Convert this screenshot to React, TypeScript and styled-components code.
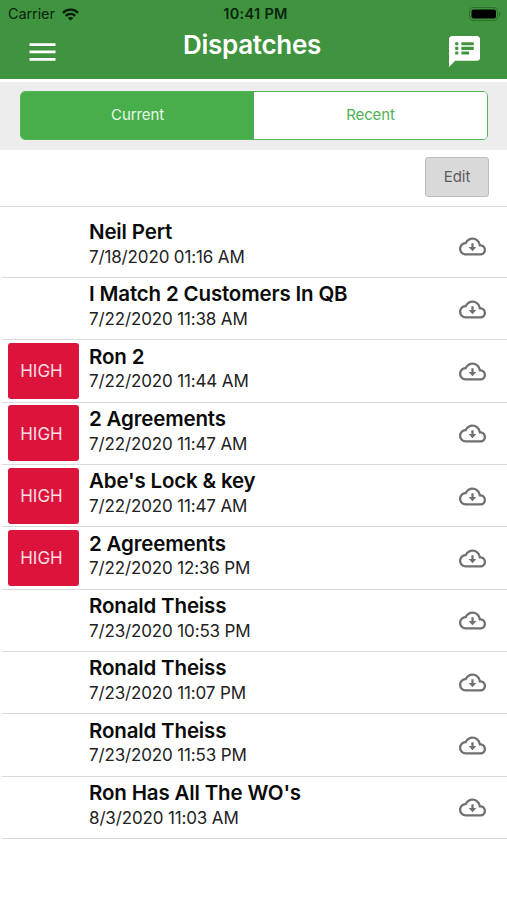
import React from "react";
import styled, { createGlobalStyle } from "styled-components";

const GlobalStyle = createGlobalStyle`
  *, *::before, *::after { box-sizing: border-box; }
  html, body { margin: 0; padding: 0; background: #fff; }
  body { font-family: Inter, "Liberation Sans", sans-serif; color: #0b0b0b; }
  button { font-family: inherit; margin: 0; padding: 0; cursor: pointer; }
`;

const Screen = styled.div`
  display: flex;
  flex-direction: column;
  width: 100%;
  height: 900px;
  overflow: hidden;
  background: #fff;
`;

const Header = styled.header`
  height: 79px;
  background: #409440;
`;

const StatusBar = styled.div`
  display: grid;
  grid-template-columns: 1fr auto 1fr;
  align-items: center;
  height: 28px;
  padding: 0 6px 0 8px;
  color: #0a250c;
`;

const Carrier = styled.div`
  display: flex;
  align-items: center;
  gap: 7px;
  font-size: 14.5px;
  line-height: 28px;
  letter-spacing: -0.1px;
`;

const Clock = styled.div`
  font-size: 14.5px;
  font-weight: 600;
  line-height: 28px;
  letter-spacing: 0.3px;
  padding-left: 2px;
`;

const BatterySlot = styled.div`
  display: flex;
  justify-content: flex-end;
  padding-bottom: 1px;
`;

const NavBar = styled.div`
  display: grid;
  grid-template-columns: 80px 1fr 80px;
  height: 51px;
  color: #fff;
`;

const IconButton = styled.button<{ $align: "start" | "end" }>`
  display: flex;
  align-items: flex-start;
  justify-content: flex-${(p) => p.$align};
  border: 0;
  background: none;
  color: #fff;
  padding: ${(p) => (p.$align === "start" ? "15px 0 0 29px" : "8px 27px 0 0")};
`;

const Title = styled.h1`
  margin: 0;
  padding: 1px 3px 0 0;
  text-align: center;
  font-size: 26px;
  font-weight: 600;
  line-height: 32px;
  letter-spacing: -0.3px;
`;

const SegmentBar = styled.div`
  height: 68px;
  margin-top: 3px;
  padding: 9px 19px 0 20px;
  background: #ededed;
`;

const Segments = styled.div`
  display: grid;
  grid-template-columns: 1fr 1fr;
  height: 49px;
  border: 1px solid #54b557;
  border-radius: 5px;
  overflow: hidden;
  background: #fff;
`;

const Segment = styled.button<{ $active?: boolean }>`
  border: 0;
  padding-bottom: 2px;
  background: ${(p) => (p.$active ? "#48ae4c" : "#fff")};
  color: ${(p) => (p.$active ? "#e6f8e6" : "#4db251")};
  font-size: 15px;
  letter-spacing: -0.1px;
`;

const Toolbar = styled.div`
  display: flex;
  justify-content: flex-end;
  height: 57px;
  padding: 7px 18px 0 0;
  border-bottom: 1px solid #dcdcdc;
`;

const EditButton = styled.button`
  width: 64px;
  height: 40px;
  padding-bottom: 2px;
  border: 1px solid #bdbdbd;
  border-radius: 3px;
  background: #d9d9d9;
  color: #5c5c5c;
  font-size: 15px;
`;

const List = styled.ul`
  margin: 0;
  padding: 8.6px 0 0 2px;
  list-style: none;
`;

const Row = styled.li`
  display: grid;
  grid-template-columns: 87px 1fr 48px;
  height: 62.33px;
  border-bottom: 1px solid #d9d9d9;
`;

const Badge = styled.div`
  display: flex;
  align-items: center;
  justify-content: center;
  width: 71px;
  height: 56px;
  margin: 2.6px 0 0 6px;
  padding: 1px 4px 0 0;
  border-radius: 3px;
  background: #dc143c;
  color: #fbdde3;
  font-size: 17px;
`;

const Details = styled.div`
  grid-column: 2;
  padding-top: 3.4px;
  white-space: nowrap;
`;

const Name = styled.div`
  font-size: 20.5px;
  font-weight: 600;
  line-height: 25px;
  letter-spacing: -0.16px;
`;

const When = styled.div`
  padding-top: 0.6px;
  font-size: 17px;
  line-height: 25px;
  letter-spacing: -0.14px;
  color: #222;
`;

const DownloadButton = styled.button`
  grid-column: 3;
  display: flex;
  align-items: flex-start;
  border: 0;
  background: none;
  color: #707070;
  padding-top: 17.6px;
`;

const WifiIcon = () => (
  <svg width="17" height="13" viewBox="0 0 17 13" fill="none" stroke="#061c08" strokeWidth="2.4">
    <path d="M.9 4.8C5.3.6 11.7.6 16.1 4.8" />
    <path d="M3.7 7.9C6.6 5.2 10.4 5.2 13.3 7.9" />
    <path d="M8.5 12.5 5.7 9.9c1.6-1.3 4-1.3 5.6 0z" fill="#061c08" stroke="none" />
  </svg>
);

const BatteryIcon = () => (
  <svg width="32" height="14" viewBox="0 0 32 14">
    <rect x=".5" y=".5" width="28" height="13" rx="3.5" fill="none" stroke="#2b702e" />
    <rect x="2.5" y="2.5" width="24.5" height="9" rx="2" fill="#000" />
    <path d="M30 4.7c2 .8 2 3.8 0 4.6z" fill="#2b702e" />
  </svg>
);

const MenuIcon = () => (
  <svg width="27" height="19" viewBox="0 0 27 19" fill="currentColor">
    <path d="M.5.3h26V3H.5zM.5 7.6h26v2.7H.5zM.5 15h26v2.8H.5z" />
  </svg>
);

const NotesIcon = () => (
  <svg width="31" height="31" viewBox="2 2 20 20" fill="currentColor">
    <path d="M20 2H4c-1.1 0-1.99.9-1.99 2L2 22l4-4h14c1.1 0 2-.9 2-2V4c0-1.1-.9-2-2-2zM8 14H6v-2h2v2zm0-3H6V9h2v2zm0-3H6V6h2v2zm7 6h-5v-2h5v2zm3-3h-8V9h8v2zm0-3h-8V6h8v2z" />
  </svg>
);

const CloudIcon = () => (
  <svg width="27" height="27" viewBox="0 0 24 24" fill="currentColor">
    <path d="M19.35 10.04C18.67 6.59 15.64 4 12 4 9.11 4 6.6 5.64 5.35 8.04 2.34 8.36 0 10.91 0 14c0 3.31 2.69 6 6 6h13c2.76 0 5-2.24 5-5 0-2.64-2.05-4.78-4.65-4.96zM19 18H6c-2.21 0-4-1.79-4-4 0-2.05 1.53-3.76 3.56-3.97l1.07-.11.5-.95C8.08 7.14 9.94 6 12 6c2.62 0 4.88 1.86 5.39 4.43l.3 1.5 1.53.11c1.56.1 2.78 1.41 2.78 2.96 0 1.65-1.35 3-3 3z" />
    <path d="M11 9.2h2v3.3h2.4L12 16.2l-3.4-3.7H11z" />
  </svg>
);

const dispatches = [
  { name: "Neil Pert", when: "7/18/2020 01:16 AM", high: false },
  { name: "I Match 2 Customers In QB", when: "7/22/2020 11:38 AM", high: false },
  { name: "Ron 2", when: "7/22/2020 11:44 AM", high: true },
  { name: "2 Agreements", when: "7/22/2020 11:47 AM", high: true },
  { name: "Abe's Lock & key", when: "7/22/2020 11:47 AM", high: true },
  { name: "2 Agreements", when: "7/22/2020 12:36 PM", high: true },
  { name: "Ronald Theiss", when: "7/23/2020 10:53 PM", high: false },
  { name: "Ronald Theiss", when: "7/23/2020 11:07 PM", high: false },
  { name: "Ronald Theiss", when: "7/23/2020 11:53 PM", high: false },
  { name: "Ron Has All The WO's", when: "8/3/2020 11:03 AM", high: false },
];

export default function App() {
  return (
    <Screen>
      <GlobalStyle />
      <Header>
        <StatusBar>
          <Carrier>
            Carrier
            <WifiIcon />
          </Carrier>
          <Clock>10:41 PM</Clock>
          <BatterySlot>
            <BatteryIcon />
          </BatterySlot>
        </StatusBar>
        <NavBar>
          <IconButton $align="start" aria-label="Menu">
            <MenuIcon />
          </IconButton>
          <Title>Dispatches</Title>
          <IconButton $align="end" aria-label="Notes">
            <NotesIcon />
          </IconButton>
        </NavBar>
      </Header>
      <SegmentBar>
        <Segments>
          <Segment $active>Current</Segment>
          <Segment>Recent</Segment>
        </Segments>
      </SegmentBar>
      <Toolbar>
        <EditButton>Edit</EditButton>
      </Toolbar>
      <List>
        {dispatches.map((d, i) => (
          <Row key={i}>
            {d.high && <Badge>HIGH</Badge>}
            <Details>
              <Name>{d.name}</Name>
              <When>{d.when}</When>
            </Details>
            <DownloadButton aria-label="Download">
              <CloudIcon />
            </DownloadButton>
          </Row>
        ))}
      </List>
    </Screen>
  );
}
